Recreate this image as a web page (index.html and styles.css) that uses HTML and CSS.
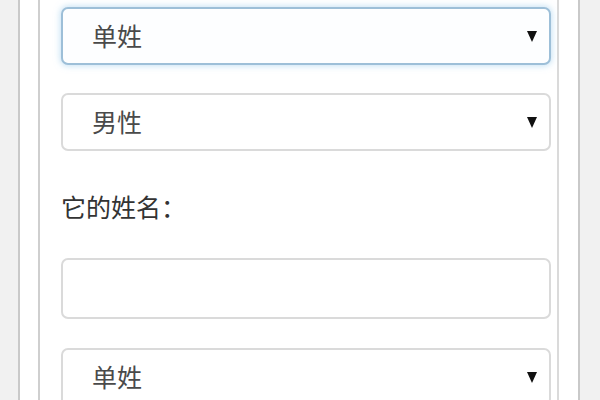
FILE: index.html
```html
<!DOCTYPE html>
<html lang="zh-CN">
<head>
<meta charset="utf-8">
<title>表单</title>
<link rel="stylesheet" href="styles.css">
</head>
<body>
<div class="frame">
  <div class="panel">
    <div class="field select focused"><span class="value">单姓</span><span class="arrow"></span></div>
    <div class="field select second"><span class="value">男性</span><span class="arrow"></span></div>
    <div class="label">它的姓名：</div>
    <div class="field input"></div>
    <div class="field select last"><span class="value">单姓</span><span class="arrow"></span></div>
  </div>
</div>
</body>
</html>
```

FILE: styles.css
```css
html, body {
  margin: 0;
  padding: 0;
  height: 100%;
  overflow: hidden;
}
body {
  background: #f1f1f1;
  font-family: "Noto Sans CJK SC", "Noto Sans", sans-serif;
}
.frame {
  margin-left: 18px;
  width: 521px;
  height: 100%;
  background: #fff;
  border-left: 2px solid #c9c9c9;
  border-right: 2px solid #c9c9c9;
  padding-left: 18px;
  padding-right: 19px;
  box-sizing: content-box;
}
.panel {
  width: 521px;
  height: 100%;
  background: #fff;
  border-left: 2px solid #cfcfcf;
  border-right: 2px solid #dadada;
  padding: 7px 6px 0 21px;
  display: flex;
  flex-direction: column;
  box-sizing: border-box;
}
.field {
  flex: none;
  box-sizing: border-box;
  border: 2px solid #dadada;
  border-radius: 7px;
  background: #fff;
  display: flex;
  align-items: center;
  justify-content: space-between;
  padding: 0 12px 0 29px;
}
.select {
  height: 58px;
}
.focused {
  border-color: #9dbfd8;
  box-shadow: 0 0 6px 1px rgba(150, 200, 235, 0.55);
  background: #fdfeff;
}
.second {
  margin-top: 28px;
}
.value {
  font-size: 25px;
  color: #4a4a4a;
  line-height: 1;
  margin-top: -2px;
}
.arrow {
  width: 0;
  height: 0;
  border-left: 5px solid transparent;
  border-right: 5px solid transparent;
  border-top: 11px solid #111;
}
.label {
  margin-top: 37px;
  line-height: 36px;
  font-size: 25px;
  color: #333;
}
.input {
  margin-top: 34px;
  height: 61px;
}
.last {
  margin-top: 29px;
}
```
